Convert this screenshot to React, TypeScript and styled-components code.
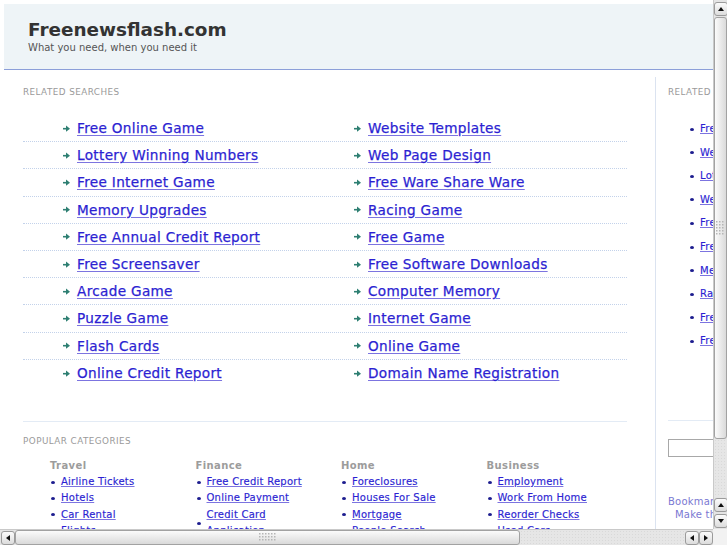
import React from "react";
import styled, { createGlobalStyle } from "styled-components";

const GlobalStyle = createGlobalStyle`
  html, body {
    margin: 0;
    padding: 0;
    background: #fff;
  }
`;

const Frame = styled.div`
  width: 727px;
  height: 545px;
  display: grid;
  grid-template-columns: 1fr 14px;
  grid-template-rows: 1fr 16px;
  overflow: hidden;
  background: #fff;
  font-family: "DejaVu Sans", Verdana, sans-serif;
`;

const Viewport = styled.div`
  overflow: hidden;
  min-width: 0;
  min-height: 0;
`;

const Page = styled.div`
  width: 950px;
  padding: 4px 0 0 4px;
`;

const Header = styled.div`
  height: 66px;
  padding: 15px 0 0 24px;
  box-sizing: border-box;
  background-color: #eef4f7;
  background-image: radial-gradient(#e2eaef 0.6px, transparent 0.7px);
  background-size: 4px 4px;
  border-bottom: 1px solid #8c9fd9;
`;

const Title = styled.div`
  font-size: 18.4px;
  font-weight: bold;
  color: #333;
  line-height: 22px;
`;

const Tagline = styled.div`
  font-size: 10px;
  color: #555;
  line-height: 13px;
`;

const Body = styled.div`
  display: grid;
  grid-template-columns: 651px 1fr;
`;

const Main = styled.div`
  padding: 16px 0 0 19px;
  width: 604px;
`;

const Sidebar = styled.div`
  margin-top: 7px;
  border-left: 1px solid #dbe3f0;
  padding: 9px 0 0 12px;
  min-height: 600px;
`;

const SectionLabel = styled.div<{ $top?: number }>`
  font-size: 8.8px;
  color: #9a9a9a;
  letter-spacing: 0.45px;
  line-height: 12px;
  margin-top: ${(p) => p.$top || 0}px;
`;

const LinkRows = styled.div`
  margin-top: 17px;
`;

const LinkRow = styled.div<{ $last?: boolean }>`
  display: grid;
  grid-template-columns: 291px 1fr;
  padding-left: 40px;
  height: 27.2px;
  box-sizing: border-box;
  align-items: center;
  border-bottom: ${(p) => (p.$last ? "none" : "1px dotted #c3d2ea")};
`;

const ArrowLink = styled.a`
  display: flex;
  align-items: center;
  gap: 7px;
  font-size: 13.6px;
  color: #2c1fd2;
  letter-spacing: 0.33px;
  -webkit-text-stroke: 0.25px #2c1fd2;
  text-decoration: underline;
  text-decoration-color: #7c74e0;
  text-underline-offset: 2px;
  cursor: pointer;
  white-space: nowrap;
`;

const Divider = styled.div<{ $top: number }>`
  margin-top: ${(p) => p.$top}px;
  border-top: 1px solid #e3ebf5;
`;

const CatGrid = styled.div`
  display: grid;
  grid-template-columns: repeat(4, 145.5px);
  padding-left: 27px;
  margin-top: 12px;
`;

const CatHead = styled.div`
  font-size: 10px;
  font-weight: bold;
  color: #9c9c9c;
  line-height: 14px;
  letter-spacing: 0.4px;
  margin-bottom: 1px;
`;

const DotList = styled.ul<{ $gap: number }>`
  list-style: none;
  margin: 0;
  padding: 0;
  display: flex;
  flex-direction: column;
  gap: ${(p) => p.$gap}px;
`;

const DotItem = styled.li<{ $indent?: number }>`
  display: flex;
  align-items: center;
  padding-left: ${(p) => p.$indent || 0}px;
  gap: 6px;
`;

const Dot = styled.span`
  flex: none;
  width: 4px;
  height: 3px;
  border-radius: 50%;
  background: #1d1d8f;
`;

const SmallLink = styled.a`
  font-size: 10px;
  line-height: 16.4px;
  color: #2c1fd2;
  letter-spacing: 0.25px;
  -webkit-text-stroke: 0.15px #2c1fd2;
  text-decoration: underline;
  text-decoration-color: #7c74e0;
  cursor: pointer;
  white-space: nowrap;
`;

const WrapLink = styled(SmallLink)`
  white-space: normal;
  width: 80px;
`;

const SideList = styled.div`
  margin-top: 23px;
`;

const SideDivider = styled.div`
  margin-top: 70px;
  border-top: 1px solid #e3ebf5;
  width: 80px;
`;

const SearchBox = styled.input`
  display: block;
  margin-top: 18px;
  width: 120px;
  height: 18px;
  box-sizing: border-box;
  border: 1px solid #a8a8a8;
  background: #fff;
`;

const SideNote = styled.div<{ $indent?: number }>`
  font-size: 10px;
  color: #7a78d2;
  line-height: 13px;
  letter-spacing: 0.2px;
  padding-left: ${(p) => p.$indent || 0}px;
  white-space: nowrap;
`;

const Notes = styled.div`
  margin-top: 38px;
`;

/* scrollbars */

const VBar = styled.div`
  display: flex;
  flex-direction: column;
  background: #e4e4e4;
  border-left: 1px solid #c9c9c9;
  box-sizing: border-box;
  padding-top: 1px;
`;

const HBar = styled.div`
  display: flex;
  background: #e4e4e4;
  border-top: 1px solid #c9c9c9;
  box-sizing: border-box;
  padding-left: 1px;
`;

const Corner = styled.div`
  background: #f2f2f2;
`;

const Btn = styled.div`
  flex: none;
  width: 12px;
  height: 12px;
  margin: 1px 0;
  border: 1px solid #9b9b9b;
  border-radius: 3px;
  background: linear-gradient(#fbfbfb, #dcdcdc);
  display: flex;
  align-items: center;
  justify-content: center;
`;

const HBtn = styled(Btn)`
  margin: 1px 0 0 0;
  height: 12px;
`;

const Thumb = styled.div<{ $vertical?: boolean }>`
  flex: none;
  box-sizing: border-box;
  border: 1px solid #a2a2a2;
  border-radius: 3px;
  background: ${(p) =>
    p.$vertical
      ? "linear-gradient(to right, #fbfbfb, #dadada)"
      : "linear-gradient(#fbfbfb, #dadada)"};
  display: flex;
  align-items: center;
  justify-content: center;
`;

const Track = styled.div`
  flex: 1;
  background-color: #e6e6e6;
  background-image: radial-gradient(#d9d9d9 0.6px, transparent 0.7px);
  background-size: 3px 3px;
`;

const Tri = ({ dir }: { dir: "up" | "down" | "left" | "right" }) => {
  const pts = {
    up: "1,6 4,2 7,6",
    down: "1,2 4,6 7,2",
    left: "6,1 2,4 6,7",
    right: "2,1 6,4 2,7",
  }[dir];
  return (
    <svg width="8" height="8" viewBox="0 0 8 8">
      <polygon points={pts} fill="#111" />
    </svg>
  );
};

const Grip = ({ cols, rows }: { cols: number; rows: number }) => (
  <svg width={cols * 3} height={rows * 3}>
    {Array.from({ length: cols * rows }).map((_, i) => (
      <rect
        key={i}
        x={(i % cols) * 3}
        y={Math.floor(i / cols) * 3}
        width="1.5"
        height="1.5"
        fill="#b5b5b5"
      />
    ))}
  </svg>
);

const Arrow = () => (
  <svg width="7" height="7" viewBox="0 0 7 7">
    <rect x="0" y="2.9" width="3.5" height="1.6" fill="#2e7f72" />
    <polygon points="3,0.4 7,3.7 3,6.8" fill="#2e7f72" />
  </svg>
);

const left = [
  "Free Online Game",
  "Lottery Winning Numbers",
  "Free Internet Game",
  "Memory Upgrades",
  "Free Annual Credit Report",
  "Free Screensaver",
  "Arcade Game",
  "Puzzle Game",
  "Flash Cards",
  "Online Credit Report",
];

const right = [
  "Website Templates",
  "Web Page Design",
  "Free Ware Share Ware",
  "Racing Game",
  "Free Game",
  "Free Software Downloads",
  "Computer Memory",
  "Internet Game",
  "Online Game",
  "Domain Name Registration",
];

const categories = [
  { name: "Travel", items: ["Airline Tickets", "Hotels", "Car Rental", "Flights"] },
  {
    name: "Finance",
    items: ["Free Credit Report", "Online Payment", "Credit Card Application"],
  },
  { name: "Home", items: ["Foreclosures", "Houses For Sale", "Mortgage", "People Search"] },
  { name: "Business", items: ["Employment", "Work From Home", "Reorder Checks", "Used Cars"] },
];

const sideLinks = left.slice(0, 5).flatMap((l, i) => [l, right[i]]);

const App = () => {
  return (
    <Frame>
      <GlobalStyle />
      <Viewport>
        <Page>
          <Header>
            <Title>Freenewsflash.com</Title>
            <Tagline>What you need, when you need it</Tagline>
          </Header>
          <Body>
            <Main>
              <SectionLabel>RELATED SEARCHES</SectionLabel>
              <LinkRows>
                {left.map((l, i) => (
                  <LinkRow key={l} $last={i === left.length - 1}>
                    <ArrowLink>
                      <Arrow />
                      {l}
                    </ArrowLink>
                    <ArrowLink>
                      <Arrow />
                      {right[i]}
                    </ArrowLink>
                  </LinkRow>
                ))}
              </LinkRows>
              <Divider $top={34} />
              <SectionLabel $top={13}>POPULAR CATEGORIES</SectionLabel>
              <CatGrid>
                {categories.map((c) => (
                  <div key={c.name}>
                    <CatHead>{c.name}</CatHead>
                    <DotList $gap={0}>
                      {c.items.map((it) => (
                        <DotItem key={it} $indent={1}>
                          <Dot />
                          {it.length > 20 ? <WrapLink>{it}</WrapLink> : <SmallLink>{it}</SmallLink>}
                        </DotItem>
                      ))}
                    </DotList>
                  </div>
                ))}
              </CatGrid>
            </Main>
            <Sidebar>
              <SectionLabel>RELATED SEARCHES</SectionLabel>
              <SideList>
                <DotList $gap={7.2}>
                  {sideLinks.map((s) => (
                    <DotItem key={s} $indent={22}>
                      <Dot />
                      <SmallLink>{s}</SmallLink>
                    </DotItem>
                  ))}
                </DotList>
              </SideList>
              <SideDivider />
              <SearchBox type="text" />
              <Notes>
                <SideNote>Bookmark this page</SideNote>
                <SideNote $indent={7}>Make this your homepage</SideNote>
              </Notes>
            </Sidebar>
          </Body>
        </Page>
      </Viewport>
      <VBar>
        <Btn>
          <Tri dir="up" />
        </Btn>
        <Thumb $vertical style={{ height: 422 }}>
          <Grip cols={3} rows={5} />
        </Thumb>
        <Track />
        <Btn>
          <Tri dir="up" />
        </Btn>
        <Btn>
          <Tri dir="down" />
        </Btn>
      </VBar>
      <HBar>
        <HBtn>
          <Tri dir="left" />
        </HBtn>
        <Thumb style={{ width: 505 }}>
          <Grip cols={6} rows={3} />
        </Thumb>
        <Track />
        <HBtn>
          <Tri dir="left" />
        </HBtn>
        <HBtn>
          <Tri dir="right" />
        </HBtn>
      </HBar>
      <Corner />
    </Frame>
  );
};

export default App;
